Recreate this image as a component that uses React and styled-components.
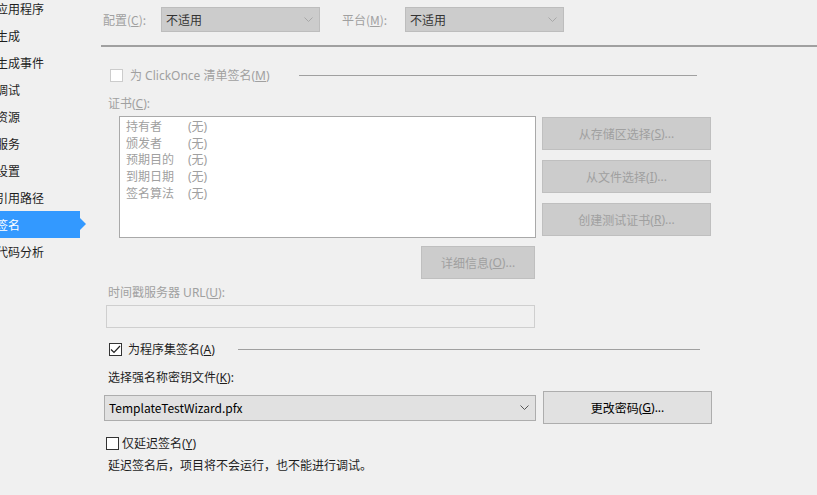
import React from 'react';
import styled, { createGlobalStyle } from 'styled-components';

const GlobalStyle = createGlobalStyle`
  html, body {
    margin: 0;
    padding: 0;
    background: #f0f0f0;
  }
  body {
    font-family: "Noto Sans", "Noto Sans CJK SC", sans-serif;
    font-size: 12px;
    color: #1e1e1e;
  }
`;

const Page = styled.div`
  display: flex;
  width: 817px;
  height: 495px;
  overflow: hidden;
  background: #f0f0f0;
`;

const Sidebar = styled.div`
  width: 101px;
  flex: none;
  display: flex;
  flex-direction: column;
  padding-top: 0;
  margin-top: -5px;
`;

const NavItem = styled.div`
  position: relative;
  height: 27px;
  width: 80px;
  display: flex;
  align-items: center;
  padding-left: 0;
  text-indent: -4px;
  white-space: nowrap;
  font-family: "Noto Sans CJK SC", sans-serif;
  font-size: 12px;
  color: ${p => (p.$active ? '#fff' : '#1e1e1e')};
  background: ${p => (p.$active ? '#3399ff' : 'transparent')};
  overflow: visible;

  &::after {
    content: '';
    display: ${p => (p.$active ? 'block' : 'none')};
    position: absolute;
    right: -6px;
    top: 7px;
    border-left: 6px solid #3399ff;
    border-top: 6.5px solid transparent;
    border-bottom: 6.5px solid transparent;
  }
`;

const Main = styled.div`
  flex: 1;
  display: flex;
  flex-direction: column;
`;

const TopBar = styled.div`
  height: 47px;
  box-sizing: border-box;
  border-bottom: 2px solid #a0a0a0;
  display: flex;
  align-items: flex-start;
  padding-top: 7px;
`;

const TopLabel = styled.span`
  color: #a0a0a0;
  margin-left: ${p => p.$ml}px;
  width: ${p => p.$w}px;
  line-height: 25px;
  font-family: "Noto Sans CJK SC", sans-serif;
`;

const Combo = styled.div`
  box-sizing: border-box;
  width: ${p => p.$w}px;
  height: ${p => p.$h || 25}px;
  background: ${p => (p.$disabled ? '#cccccc' : '#e1e1e1')};
  border: 1px solid ${p => (p.$disabled ? '#bdbdbd' : '#adadad')};
  display: flex;
  align-items: center;
  justify-content: space-between;
  padding: 0 6px 0 4px;
  color: ${p => (p.$disabled ? '#333' : '#000')};
  font-family: "Noto Sans CJK SC", sans-serif;
`;

const Chevron = ({ color }) => (
  <svg width="9" height="5" viewBox="0 0 9 5">
    <path d="M0.5 0.5 L4.5 4.5 L8.5 0.5" fill="none" stroke={color} strokeWidth="1" />
  </svg>
);

const Body = styled.div`
  display: flex;
  flex-direction: column;
  padding-left: 5px;
`;

const CheckRow = styled.div`
  display: flex;
  align-items: center;
  height: 16px;
  margin-top: ${p => p.$mt}px;
  margin-left: ${p => p.$ml || 0}px;
  width: ${p => p.$w}px;
  color: ${p => (p.$disabled ? '#a0a0a0' : '#1e1e1e')};
`;

const Box = styled.span`
  box-sizing: border-box;
  width: 13px;
  height: 13px;
  flex: none;
  border: 1px solid ${p => (p.$disabled ? '#cccccc' : '#333333')};
  background: #fff;
  display: flex;
  align-items: center;
  justify-content: center;
  margin-right: ${p => p.$gap}px;
`;

const Rule = styled.div`
  flex: 1;
  height: 1px;
  background: #a0a0a0;
  margin-left: ${p => p.$ml}px;
`;

const Label = styled.div`
  color: ${p => (p.$disabled ? '#a0a0a0' : '#1e1e1e')};
  margin-top: ${p => p.$mt}px;
  margin-left: ${p => p.$ml || 2}px;
  line-height: 16px;
`;

const CertArea = styled.div`
  display: flex;
  margin-top: ${p => p.$mt}px;
  margin-left: 13px;
`;

const CertBox = styled.div`
  box-sizing: border-box;
  width: 417px;
  height: 122px;
  background: #fff;
  border: 1px solid #a9a9a9;
  padding: 2px 6px;
  color: #a0a0a0;
`;

const CertRow = styled.div`
  display: grid;
  grid-template-columns: 62px auto;
  line-height: 16.7px;
`;

const ButtonCol = styled.div`
  display: flex;
  flex-direction: column;
  gap: 10px;
  margin-left: 6px;
  margin-top: 1px;
`;

const Button = styled.div`
  box-sizing: border-box;
  width: ${p => p.$w || 169}px;
  height: 33px;
  display: flex;
  align-items: center;
  justify-content: center;
  background: ${p => (p.$disabled ? '#cccccc' : '#e1e1e1')};
  border: 1px solid ${p => (p.$disabled ? '#bfbfbf' : '#adadad')};
  color: ${p => (p.$disabled ? '#a0a0a0' : '#000')};
  margin-left: ${p => p.$ml || 0}px;
  margin-top: ${p => p.$mt || 0}px;
`;

const TextField = styled.div`
  box-sizing: border-box;
  width: 429px;
  height: 23px;
  margin-top: ${p => p.$mt}px;
  border: 1px solid #cfcfcf;
  background: #f0f0f0;
`;

const KeyRow = styled.div`
  display: flex;
  align-items: center;
  margin-top: ${p => p.$mt}px;
  margin-left: -2px;
  gap: 7px;
`;

const Note = styled.div`
  margin-top: ${p => p.$mt}px;
  margin-left: 2px;
  line-height: 16px;
  color: #1e1e1e;
`;

const Check = () => (
  <svg width="11" height="9" viewBox="0 0 11 9">
    <path d="M1 4.5 L4 7.5 L10 1" fill="none" stroke="#222" strokeWidth="1.2" />
  </svg>
);

const navItems = ['应用程序', '生成', '生成事件', '调试', '资源', '服务', '设置', '引用路径', '签名', '代码分析'];

const certRows = [
  ['持有者', '(无)'],
  ['颁发者', '(无)'],
  ['预期目的', '(无)'],
  ['到期日期', '(无)'],
  ['签名算法', '(无)'],
];

export default function App() {
  return (
    <Page>
      <GlobalStyle />
      <Sidebar>
        {navItems.map(item => (
          <NavItem key={item} $active={item === '签名'}>{item}</NavItem>
        ))}
      </Sidebar>
      <Main>
        <TopBar>
          <TopLabel $ml={2} $w={58}>配置(<u>C</u>):</TopLabel>
          <Combo $w={159} $disabled>
            <span>不适用</span>
            <Chevron color="#a8a8a8" />
          </Combo>
          <TopLabel $ml={22} $w={63}>平台(<u>M</u>):</TopLabel>
          <Combo $w={159} $disabled>
            <span>不适用</span>
            <Chevron color="#a8a8a8" />
          </Combo>
        </TopBar>
        <Body>
          <CheckRow $mt={20} $ml={4} $w={587} $disabled>
            <Box $disabled $gap={7} />
            <span>为 ClickOnce 清单签名(<u>M</u>)</span>
            <Rule $ml={29} />
          </CheckRow>
          <Label $mt={13} $disabled>证书(<u>C</u>):</Label>
          <CertArea $mt={4}>
            <div>
              <CertBox>
                {certRows.map(([k, v]) => (
                  <CertRow key={k}><span>{k}</span><span>{v}</span></CertRow>
                ))}
              </CertBox>
              <Button $disabled $w={114} $ml={302} $mt={8}>详细信息(<u>O</u>)...</Button>
            </div>
            <ButtonCol>
              <Button $disabled>从存储区选择(<u>S</u>)...</Button>
              <Button $disabled>从文件选择(<u>I</u>)...</Button>
              <Button $disabled>创建测试证书(<u>R</u>)...</Button>
            </ButtonCol>
          </CertArea>
          <Label $mt={6} $disabled>时间戳服务器 URL(<u>U</u>):</Label>
          <TextField $mt={4} />
          <CheckRow $mt={13} $ml={3} $w={591}>
            <Box $gap={6}><Check /></Box>
            <span>为程序集签名(<u>A</u>)</span>
            <Rule $ml={23} />
          </CheckRow>
          <Label $mt={13}>选择强名称密钥文件(<u>K</u>):</Label>
          <KeyRow $mt={5}>
            <Combo $w={432} $h={26}>
              <span>TemplateTestWizard.pfx</span>
              <Chevron color="#555" />
            </Combo>
            <Button $w={169}>更改密码(<u>G</u>)...</Button>
          </KeyRow>
          <CheckRow $mt={11} $ml={0}>
            <Box $gap={3} />
            <span>仅延迟签名(<u>Y</u>)</span>
          </CheckRow>
          <Note $mt={7}>延迟签名后，项目将不会运行，也不能进行调试。</Note>
        </Body>
      </Main>
    </Page>
  );
}
